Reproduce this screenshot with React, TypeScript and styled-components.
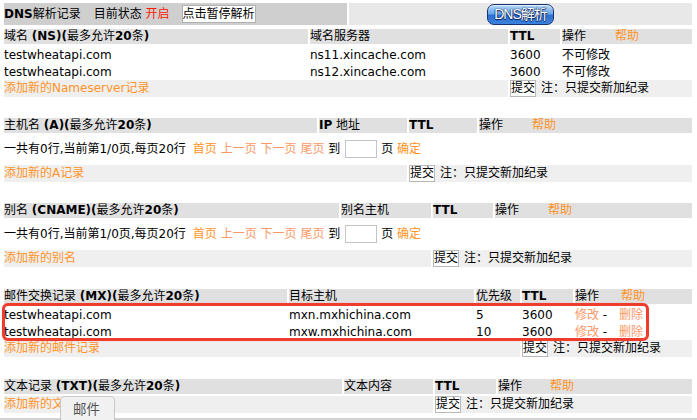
import React from "react";
import styled, { createGlobalStyle } from "styled-components";

const GlobalStyle = createGlobalStyle`
  html, body { margin: 0; padding: 0; background: #fff; }
  body {
    font-family: "DejaVu Sans", "Noto Sans CJK SC", sans-serif;
    font-size: 12px;
    color: #000;
  }
`;

const Page = styled.div`
  position: relative;
  width: 697px;
  height: 420px;
  overflow: hidden;
  box-sizing: border-box;
  padding: 1px 0 0 2px;
`;

const Table = styled.table<{ $gap?: number }>`
  width: 692px;
  table-layout: fixed;
  border-collapse: separate;
  border-spacing: 2px;
  margin-top: ${(p) => p.$gap ?? 0}px;
  font-size: 12px;
`;

const Col = styled.col<{ $w: number }>`
  width: ${(p) => p.$w}px;
`;

const Cell = styled.td`
  padding: 0;
  white-space: nowrap;
  overflow: visible;
  vertical-align: middle;
  line-height: 15px;
`;

const TopLeft = styled(Cell)`
  background: #cfcfcf;
  height: 22px;
`;

const TopRight = styled(Cell)`
  background: #e8e8e8;
  height: 22px;
  text-align: center;
`;

const HeadCell = styled(Cell)`
  background: #e0e0e0;
  height: 15px;
`;

const DataCell = styled(Cell)`
  height: 15px;
  vertical-align: top;
`;

const CellText = styled.div`
  height: 15px;
  box-sizing: border-box;
  padding-top: 2px;
  line-height: 15px;
  overflow: visible;
`;

const AddCell = styled(Cell)`
  background: #efefef;
  height: 17px;
`;

const PagerCell = styled(Cell)`
  height: 28px;
`;

const B = styled.b`
  font-weight: bold;
`;

const Red = styled.span`
  color: #ff1a00;
`;

const Gap = styled.span<{ $w: number }>`
  display: inline-block;
  width: ${(p) => p.$w}px;
`;

const Link = styled.span<{ $soft?: boolean }>`
  color: ${(p) => (p.$soft ? "#fb9868" : "#ff9326")};
  cursor: pointer;
`;

const Help = styled(Link)<{ $ml: number }>`
  margin-left: ${(p) => p.$ml}px;
`;

const PauseButton = styled.button`
  font: inherit;
  font-size: 12px;
  line-height: 15px;
  height: 18px;
  width: 74px;
  padding: 0;
  border: 1px solid #b0b0b0;
  background: #fff;
  color: #000;
  margin-left: 12px;
  vertical-align: middle;
`;

const DnsButton = styled.button`
  width: 67px;
  height: 21px;
  margin-top: 1px;
  border: 1px solid #16346e;
  border-radius: 7px;
  padding: 0;
  background: linear-gradient(
    to bottom,
    #b7d8f8 0%,
    #6aa6ea 45%,
    #2f6fd0 55%,
    #3b84e0 100%
  );
  box-shadow: inset 0 1px 0 rgba(255, 255, 255, 0.6);
  color: #fff;
  font-family: "Liberation Sans", "Noto Sans CJK SC", sans-serif;
  font-size: 14px;
  letter-spacing: -1px;
  line-height: 19px;
  text-shadow: 0 0 1px #0a1f55, 0 0 1px #0a1f55, 0 1px 1px #0a1f55;
  vertical-align: middle;
`;

const SubmitButton = styled.button`
  font: inherit;
  font-size: 12px;
  line-height: 15px;
  height: 17px;
  width: 26px;
  padding: 0;
  border: 1px solid #b8b8b8;
  background: #fff;
  color: #000;
  margin-right: 5px;
  vertical-align: middle;
`;

const PageInput = styled.input`
  width: 32px;
  height: 18px;
  box-sizing: border-box;
  border: 1px solid #c4c4c4;
  margin: 0 4px 0 5px;
  padding: 0;
  vertical-align: middle;
`;

const Highlight = styled.div`
  position: absolute;
  left: 2px;
  top: 303px;
  width: 647px;
  height: 38px;
  box-sizing: border-box;
  border: 3px solid #ef3d2d;
  border-radius: 6px;
  box-shadow: 0 0 1px rgba(239, 61, 45, 0.5);
  pointer-events: none;
`;

const Tooltip = styled.div`
  position: absolute;
  left: 60px;
  top: 396px;
  width: 55px;
  height: 32px;
  box-sizing: border-box;
  background: #f1f1f1;
  border: 1px solid #c8c8c8;
  border-radius: 4px;
  color: #555;
  font-family: "Noto Sans CJK SC", sans-serif;
  font-size: 13.5px;
  line-height: 22px;
  padding-left: 12px;
  z-index: 2;
`;

const Rule = styled.div`
  margin-top: 3px;
  height: 3px;
  width: 697px;
  margin-left: -2px;
  background: #d2d2d2;
`;

type Section = {
  gap: number;
  widths: number[];
  head: React.ReactNode[];
  helpGap: number;
  rows?: React.ReactNode[][];
  pager?: boolean;
  addLabel: string;
  addSpan: number;
};

const Title = ({ name, code }: { name: string; code: string }) => (
  <>
    {name} <B>({code})(</B>最多允许<B>20</B>条<B>)</B>
  </>
);

const Actions = () => (
  <>
    <Link $soft>修改</Link> - <Help $soft $ml={8}>删除</Help>
  </>
);

const sections: Section[] = [
  {
    gap: 0,
    widths: [304, 198, 50, 130],
    head: [<Title name="域名" code="NS" />, "域名服务器", <B>TTL</B>],
    helpGap: 29,
    rows: [
      ["testwheatapi.com", "ns11.xincache.com", "3600", "不可修改"],
      ["testwheatapi.com", "ns12.xincache.com", "3600", "不可修改"],
    ],
    addLabel: "添加新的Nameserver记录",
    addSpan: 2,
  },
  {
    gap: 17,
    widths: [313, 88, 68, 213],
    head: [
      <Title name="主机名" code="A" />,
      <>
        <B>IP</B> 地址
      </>,
      <B>TTL</B>,
    ],
    helpGap: 29,
    pager: true,
    addLabel: "添加新的A记录",
    addSpan: 2,
  },
  {
    gap: 17,
    widths: [335, 90, 60, 197],
    head: [<Title name="别名" code="CNAME" />, "别名主机", <B>TTL</B>],
    helpGap: 29,
    pager: true,
    addLabel: "添加新的别名",
    addSpan: 2,
  },
  {
    gap: 18,
    widths: [283, 185, 44, 51, 117],
    head: [
      <Title name="邮件交换记录" code="MX" />,
      "目标主机",
      "优先级",
      <B>TTL</B>,
    ],
    helpGap: 22,
    rows: [
      ["testwheatapi.com", "mxn.mxhichina.com", "5", "3600", <Actions />],
      ["testwheatapi.com", "mxw.mxhichina.com", "10", "3600", <Actions />],
    ],
    addLabel: "添加新的邮件记录",
    addSpan: 3,
  },
  {
    gap: 18,
    widths: [338, 89, 61, 194],
    head: [<Title name="文本记录" code="TXT" />, "文本内容", <B>TTL</B>],
    helpGap: 28,
    addLabel: "添加新的文本记录",
    addSpan: 2,
  },
];

const Pager = () => (
  <>
    一共有0行,当前第1/0页,每页20行<Gap $w={7} />
    <Link>首页</Link> <Link $soft>上一页</Link> <Link $soft>下一页</Link>{" "}
    <Link $soft>尾页</Link> 到
    <PageInput type="text" />页 <Link>确定</Link>
  </>
);

const RecordTable = ({ s }: { s: Section }) => {
  const n = s.widths.length;
  return (
    <Table $gap={s.gap}>
      <colgroup>
        {s.widths.map((w, i) => (
          <Col key={i} $w={w} />
        ))}
      </colgroup>
      <tbody>
        <tr>
          {s.head.map((h, i) => (
            <HeadCell key={i}>{h}</HeadCell>
          ))}
          <HeadCell>
            操作<Help $ml={s.helpGap}>帮助</Help>
          </HeadCell>
        </tr>
        {s.rows?.map((r, i) => (
          <tr key={i}>
            {r.map((c, j) => (
              <DataCell key={j}>
                <CellText>{c}</CellText>
              </DataCell>
            ))}
          </tr>
        ))}
        {s.pager && (
          <tr>
            <PagerCell colSpan={n}>
              <Pager />
            </PagerCell>
          </tr>
        )}
        <tr>
          <AddCell colSpan={s.addSpan}>
            <Link>{s.addLabel}</Link>
          </AddCell>
          <AddCell colSpan={n - s.addSpan}>
            <SubmitButton>提交</SubmitButton>注：只提交新加纪录
          </AddCell>
        </tr>
      </tbody>
    </Table>
  );
};

export default function App() {
  return (
    <>
      <GlobalStyle />
      <Page>
        <Table>
          <colgroup>
            <Col $w={341} />
            <Col $w={341} />
          </colgroup>
          <tbody>
            <tr>
              <TopLeft>
                <B>DNS</B>解析记录
                <Gap $w={13} />
                目前状态 <Red>开启</Red>
                <PauseButton>点击暂停解析</PauseButton>
              </TopLeft>
              <TopRight>
                <DnsButton>DNS解析</DnsButton>
              </TopRight>
            </tr>
          </tbody>
        </Table>
        {sections.map((s, i) => (
          <RecordTable key={i} s={s} />
        ))}
        <Rule />
        <Highlight />
        <Tooltip>邮件</Tooltip>
      </Page>
    </>
  );
}
